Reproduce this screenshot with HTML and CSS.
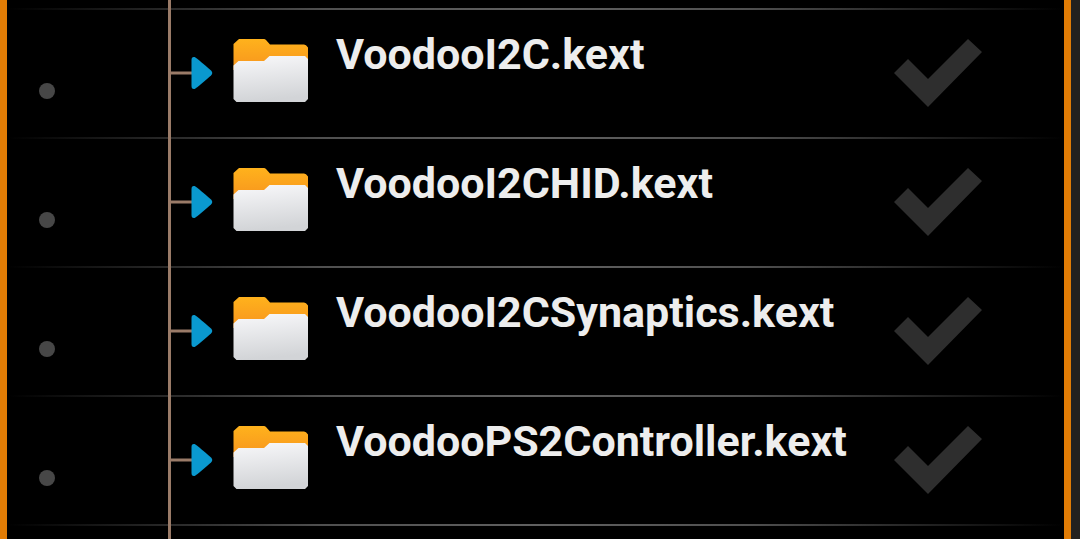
FILE: index.html
```html
<!DOCTYPE html>
<html lang="en">
<head>
<meta charset="utf-8">
<meta name="viewport" content="width=device-width, initial-scale=1">
<title>Kexts</title>
<link rel="stylesheet" href="styles.css">
</head>
<body>
<svg class="defs" aria-hidden="true">
  <defs>
    <linearGradient id="back" x1="0" y1="0" x2="0" y2="1">
      <stop offset="0" stop-color="#ffb21c"/>
      <stop offset="1" stop-color="#f7941e"/>
    </linearGradient>
    <linearGradient id="front" x1="0" y1="0" x2="0.15" y2="1">
      <stop offset="0" stop-color="#f8f8fa"/>
      <stop offset="1" stop-color="#d2d4d7"/>
    </linearGradient>
    <symbol id="folder" viewBox="0 0 75 64">
      <path fill="url(#back)" d="M0.5 32V6L6 1H31Q32 1 33 2L37 6.500H71Q73 6.500 75 9.500V32Z"/>
      <path fill="url(#front)" d="M0.500 27.500L5.500 23H31L36.500 18H72L75 21V61L72 64H3.500L0.500 61Z"/>
    </symbol>
    <symbol id="branch" viewBox="0 0 42 34">
      <path fill="#9a7b68" d="M0 15.500H22V18.500H0Z"/>
      <path fill="#0a99cf" d="M20.500 4Q20.500 0.500 23.500 1Q25 1.300 40 14.500Q42.500 17 40 19.500Q25 32.700 23.500 33Q20.500 33.500 20.500 30Z"/>
    </symbol>
  </defs>
</svg>
<main class="panel">
  <ul class="tree">
    <li class="row">
      <span class="marker"></span>
      <span class="stem"><svg class="branch" aria-hidden="true"><use href="#branch"/></svg></span>
      <svg class="folder" aria-hidden="true"><use href="#folder"/></svg>
      <label class="name" for="k1">VoodooI2C.kext</label>
      <input class="check" type="checkbox" id="k1">
    </li>
    <li class="row">
      <span class="marker"></span>
      <span class="stem"><svg class="branch" aria-hidden="true"><use href="#branch"/></svg></span>
      <svg class="folder" aria-hidden="true"><use href="#folder"/></svg>
      <label class="name" for="k2">VoodooI2CHID.kext</label>
      <input class="check" type="checkbox" id="k2">
    </li>
    <li class="row">
      <span class="marker"></span>
      <span class="stem"><svg class="branch" aria-hidden="true"><use href="#branch"/></svg></span>
      <svg class="folder" aria-hidden="true"><use href="#folder"/></svg>
      <label class="name" for="k3">VoodooI2CSynaptics.kext</label>
      <input class="check" type="checkbox" id="k3">
    </li>
    <li class="row">
      <span class="marker"></span>
      <span class="stem"><svg class="branch" aria-hidden="true"><use href="#branch"/></svg></span>
      <svg class="folder" aria-hidden="true"><use href="#folder"/></svg>
      <label class="name" for="k4">VoodooPS2Controller.kext</label>
      <input class="check" type="checkbox" id="k4">
    </li>
    <li class="row row-end"><span></span><span class="stem"></span></li>
  </ul>
</main>
<aside class="next-panel"></aside>
</body>
</html>
```
FILE: styles.css
```css
* {
  box-sizing: border-box;
}

body {
  margin: 0;
  min-height: 100vh;
  display: flex;
  background: #000;
  color: #ededed;
  font-family: Roboto, "Liberation Sans", sans-serif;
}

.defs {
  position: absolute;
  width: 0;
  height: 0;
}

.panel {
  flex: 1;
  display: flex;
  border: solid #e17c05;
  border-width: 0 7px;
}

.next-panel {
  width: 9px;
  background: #23211f;
}

.tree {
  flex: 1;
  margin: 0;
  padding: 8px 0 0;
  list-style: none;
  background: linear-gradient(#9a7b68, #9a7b68) 161px 0 / 3px 8px no-repeat;
}

.row {
  display: grid;
  grid-template-columns: 161px 65px 75px 1fr 88px;
  align-items: start;
  padding-right: 82px;
  height: 129px;
  background: linear-gradient(90deg, transparent, #505050 30%, #606060 50%, #505050 70%, transparent) 0 0 / 100% 2px no-repeat;
}

.row-end {
  height: 15px;
}

.marker {
  width: 16px;
  height: 16px;
  margin: 75px 0 0 32px;
  border-radius: 50%;
  background: #474747;
}

.stem {
  align-self: stretch;
  border-left: 3px solid #9a7b68;
}

.branch {
  display: block;
  width: 42px;
  height: 34px;
  margin-top: 48px;
}

.folder {
  width: 75px;
  height: 64px;
  margin-top: 30px;
}

.name {
  padding: 20px 0 0 28px;
  font-size: 43px;
  font-weight: 700;
  line-height: 52px;
  white-space: nowrap;
}

.check {
  appearance: none;
  width: 88px;
  height: 68px;
  margin: 31px 0 0;
  background: #2e2e2e;
  clip-path: polygon(0 34px, 14px 20px, 34px 40px, 74px 0, 88px 13px, 34px 68px);
}
```
